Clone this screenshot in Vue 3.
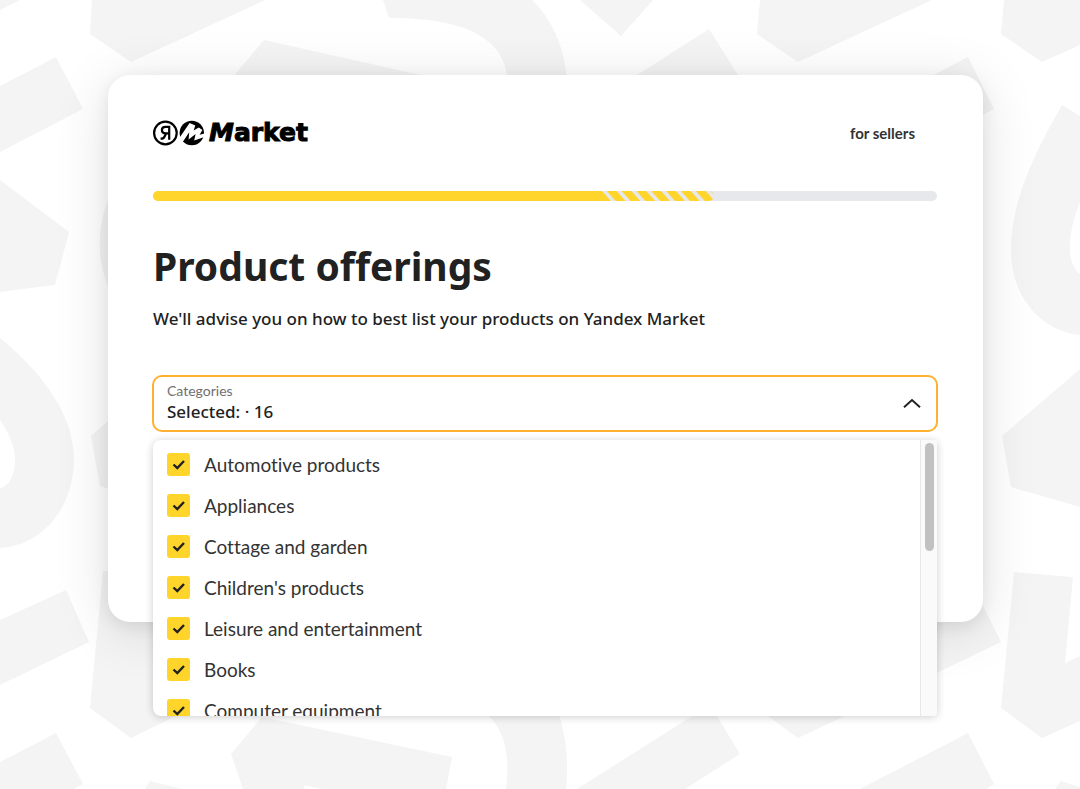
<script setup>
import { ref, computed } from 'vue'

const categories = ref([
  { id: 'auto', name: 'Automotive products', checked: true },
  { id: 'appliances', name: 'Appliances', checked: true },
  { id: 'garden', name: 'Cottage and garden', checked: true },
  { id: 'children', name: "Children's products", checked: true },
  { id: 'leisure', name: 'Leisure and entertainment', checked: true },
  { id: 'books', name: 'Books', checked: true },
  { id: 'computer', name: 'Computer equipment', checked: true }
])
// Categories further down the list that are selected as well
const selectedBelow = 9
const selected = computed(() => categories.value.filter(c => c.checked).length + selectedBelow)
const open = ref(true)
const stripes = [0, 1, 2, 3, 4, 5, 6, 7].map(i => {
  const x = Math.round((4.7 + i * 14.8) * 10) / 10
  return `M${x} 0h9.8l9 10h-9.8z`
})
</script>

<template>
  <div class="page">
    <svg class="backdrop" viewBox="0 0 1080 789" preserveAspectRatio="xMidYMin slice" aria-hidden="true">
      <path d="M0 0H20L0 10Z" />
      <path d="M92 0L90 34L131 62L265 0Z" />
      <path d="M0 86L56 57L83 109L0 152Z" />
      <path d="M0 180L69 232L55 285L0 292Z" />
      <path d="M264 40L425 76V90H222Z" />
      <path d="M383 0L389 18C450 18 507 30 508 85H567C566 50 553 20 532 0Z" />
      <path d="M580 0L621 36L653 0Z" />
      <path d="M709 29L745 86L620 86Z" />
      <path d="M760 0L757 34L798 62L932 0Z" />
      <path d="M920 82L968 57L994 109L950 132Z" />
      <path d="M1004 0L1001 34L1042 62L1080 45V0Z" />
      <path d="M1062 105L1080 116V202C1068 232 1065 262 1080 274V335C1041 331 1011 297 1011 250C1011 206 1030 160 1062 105Z" />
      <path d="M1080 369L1002 436L1011 487L1080 507Z" />
      <path d="M1014 572L1073 577L1065 663L1080 656V721L1042 738L1001 708Z" />
      <path d="M970 580L1001 642L920 681V600Z" />
      <path d="M968 733L860 789H986L994 784Z" />
      <path d="M1061 781L1055 789H1080V787Z" />
      <path d="M0 338C45 375 74 417 74 459C74 505 45 545 0 548V488C9 487 15 475 15 460C15 447 9 433 0 420Z" />
      <path d="M0 620L66 590L89 642L0 685Z" />
      <path d="M103 571L190 578V709L131 738L90 708Z" />
      <path d="M120 411L91 436L100 486L120 492Z" />
      <path d="M115 185C94 225 95 265 115 300Z" />
      <path d="M0 762L56 733L83 784L73 789H0Z" />
      <path d="M150 781L145 789H182Z" />
      <path d="M262 717L231 754L243 789H304V785L322 789H446L452 757Z" />
      <path d="M480 708C506 727 510 755 506 789H566C569 760 566 735 557 708Z" />
      <path d="M705 708L577 789H685L740 754L712 708Z" />
      <path d="M757 708L798 738L862 708Z" />
    </svg>

    <main class="card">
      <header class="top">
        <a class="logo" href="#" aria-label="Yandex Market">
          <svg width="52" height="26" viewBox="0 0 52 26" aria-hidden="true">
            <circle cx="12.4" cy="13" r="11.3" fill="#fff" stroke="#000" stroke-width="2.2" />
            <path d="M16.2 6V19.8M17.3 6.9H12.6C10 6.9 8.9 8.2 8.9 10.1C8.9 12.1 10.1 13.4 12.6 13.4H16M13.1 13.4L11.6 16.5C10.9 18.2 10 18.8 7.6 18.7" fill="none" stroke="#000" stroke-width="2.2" />
            <circle cx="38.8" cy="13" r="12.2" fill="#000" />
            <path d="M26 18.6L36.6 3L42.3 5.6L40.6 10.6L45.8 7.6L49.4 10L46.6 14.8L51.6 13.4L51.4 17L41.2 20.6L42.6 14L35.6 19.4L36.2 12.2L29.4 22.4Z" fill="#fff" />
          </svg>
          <span class="wordmark"><i>M</i>arket</span>
        </a>
        <a class="sellers" href="#">for sellers</a>
      </header>

      <div class="progress" role="progressbar" aria-label="Registration progress" aria-valuenow="57" aria-valuemin="0" aria-valuemax="100">
        <div class="done"></div>
        <svg class="stripes" viewBox="0 0 111 10" preserveAspectRatio="none" aria-hidden="true">
          <path d="M-1 0H0L9 10H-1Z" />
          <path v-for="d in stripes" :key="d" :d="d" />
        </svg>
      </div>

      <h1>Product offerings</h1>
      <p class="lead">We'll advise you on how to best list your products on Yandex Market</p>

      <div class="field">
        <button class="select" type="button" :aria-expanded="open" aria-controls="category-list" @click="open = !open">
          <span class="value">
            <span class="caption">Categories</span>
            <span class="count">Selected: · {{ selected }}</span>
          </span>
          <svg class="chevron" width="20" height="12" viewBox="0 0 20 12" aria-hidden="true">
            <path d="M2 10.2L10 3L18 10.2" />
          </svg>
        </button>

        <div v-if="open" id="category-list" class="menu">
          <ul class="options">
            <li v-for="c in categories" :key="c.id">
              <label :for="c.id">
                <span class="box">
                  <input :id="c.id" v-model="c.checked" type="checkbox" />
                  <svg v-if="c.checked" viewBox="0 0 23 23" aria-hidden="true"><path d="M6.5 11.5L10.3 15.1L17 8" /></svg>
                </span>
                <span>{{ c.name }}</span>
              </label>
            </li>
          </ul>
          <div class="track"><div class="thumb"></div></div>
        </div>
      </div>
    </main>
  </div>
</template>

<style>
body {
  background: #fff;
}
</style>

<style scoped>
* {
  box-sizing: border-box;
}
.page {
  position: relative;
  min-height: 100vh;
  padding: 75px 97px 75px 108px;
  overflow: hidden;
  font-family: Lato, "Noto Sans", sans-serif;
  font-variant-ligatures: none;
  color: #212121;
}
.backdrop {
  position: absolute;
  inset: 0;
  width: 100%;
  height: 100%;
  fill: #f4f4f4;
}
.card {
  position: relative;
  padding: 44px 46px 190px 45px;
  border-radius: 22px;
  background: #fff;
  box-shadow: 0 8px 56px rgba(0, 0, 0, 0.12), 0 4px 16px rgba(0, 0, 0, 0.08);
}
.top {
  display: flex;
  align-items: center;
  justify-content: space-between;
  height: 28px;
  padding-right: 22px;
}
.logo {
  display: flex;
  align-items: center;
  gap: 4px;
  color: #000;
  text-decoration: none;
}
.wordmark {
  font: bold 25px/28px "DejaVu Sans", sans-serif;
  -webkit-text-stroke: 1px #000;
}
.sellers {
  font-size: 15px;
  font-weight: 700;
  line-height: 20px;
  color: #333;
  text-decoration: none;
}
.progress {
  display: flex;
  height: 10px;
  margin-top: 44px;
  border-radius: 5px;
  background: #e6e8eb;
  overflow: hidden;
}
.done {
  flex: 0 0 57.3%;
  background: #ffd42b;
}
.stripes {
  flex: 0 0 14.2%;
  width: 14.2%;
  height: 10px;
  border-radius: 0 5px 5px 0;
  fill: #ffd42b;
}
h1 {
  margin: 37px 0 0;
  font-family: "Noto Sans", sans-serif;
  font-size: 39px;
  font-weight: 700;
  line-height: 56px;
}
.lead {
  margin: 13px 0 0;
  font-family: "Noto Sans", sans-serif;
  font-size: 17px;
  font-weight: 500;
  line-height: 24px;
}
.field {
  position: relative;
  margin: 44px -1px 0;
}
.select {
  display: flex;
  align-items: center;
  justify-content: space-between;
  width: 100%;
  height: 57px;
  padding: 0 14px 2px 13px;
  border: 2px solid #ffb02e;
  border-radius: 10px;
  background: #fff;
  font: inherit;
  color: inherit;
  text-align: left;
}
.value {
  display: flex;
  flex-direction: column;
}
.caption {
  font-size: 14px;
  line-height: 18px;
  color: #6f6f6f;
}
.count {
  font-family: "Noto Sans", sans-serif;
  font-size: 17px;
  font-weight: 500;
  line-height: 24px;
}
.chevron path {
  fill: none;
  stroke: #212121;
  stroke-width: 2;
}
.menu {
  position: absolute;
  top: 65px;
  left: 1px;
  right: 1px;
  display: flex;
  height: 276px;
  border-radius: 8px 4px 4px 8px;
  background: #fff;
  box-shadow: 0 1px 8px rgba(0, 0, 0, 0.2);
  overflow: hidden;
}
.options {
  flex: 1;
  margin: 0;
  padding: 4px 14px;
  list-style: none;
}
.options label {
  display: flex;
  align-items: center;
  gap: 14px;
  height: 41px;
  font-size: 19px;
  line-height: 24px;
  color: #333;
}
.box {
  position: relative;
  width: 23px;
  height: 23px;
}
.box input {
  display: block;
  width: 23px;
  height: 23px;
  margin: 0;
  border: 1px solid #c4c4c4;
  border-radius: 3px;
  appearance: none;
}
.box input:checked {
  border: 0;
  background: #ffd42b;
}
.box svg {
  position: absolute;
  inset: 0;
  fill: none;
  stroke: #212121;
  stroke-width: 2.4;
  pointer-events: none;
}
.track {
  flex: 0 0 17px;
  padding: 3px 3px 0 4px;
  border-left: 1px solid #e8e8e8;
  background: #fafafa;
}
.thumb {
  height: 108px;
  border-radius: 5px;
  background: #c1c1c1;
}
</style>
